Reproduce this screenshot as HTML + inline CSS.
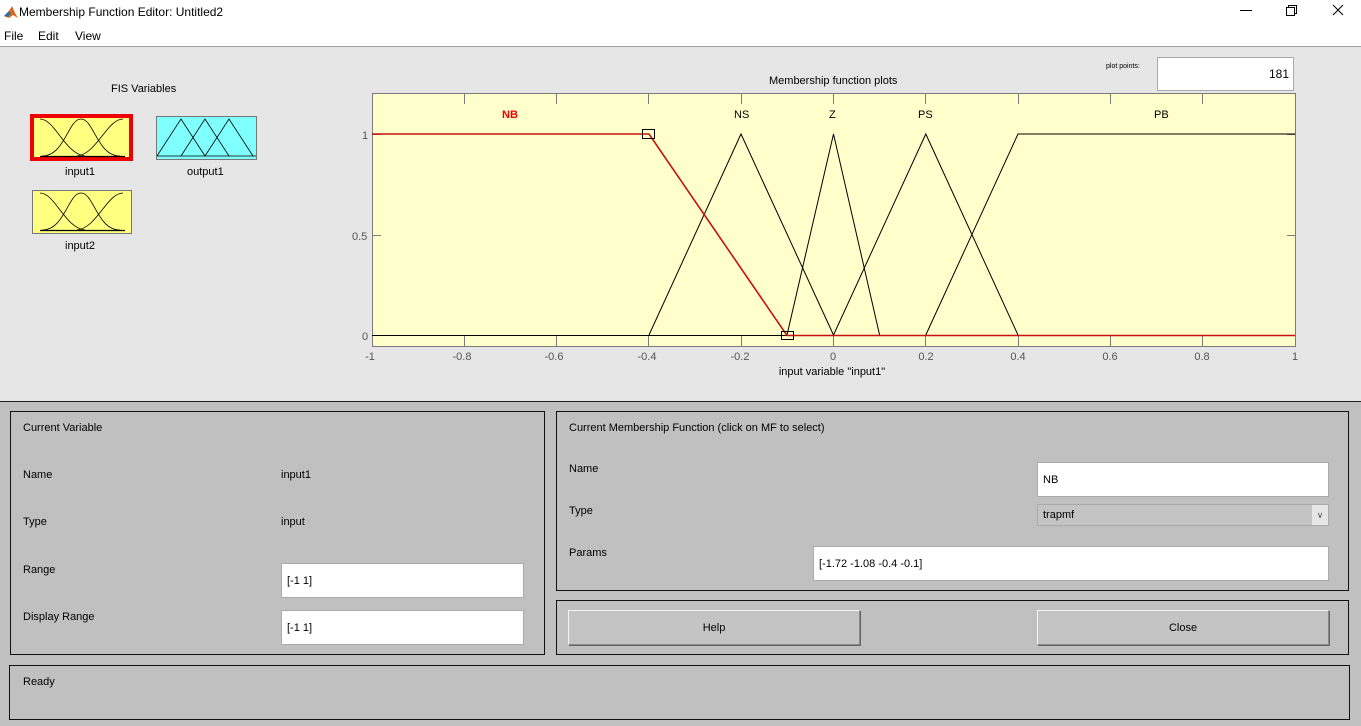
<!DOCTYPE html>
<html><head><meta charset="utf-8"><style>
*{margin:0;padding:0;box-sizing:border-box}
body{width:1361px;height:726px;overflow:hidden;background:#e6e6e6;font-family:"Liberation Sans",Arial,sans-serif;font-size:11px;color:#000;position:relative}
.a{position:absolute}
.title{left:0;top:0;width:1361px;height:25px;background:#fff}
.menu{left:0;top:25px;width:1361px;height:22px;background:#fff;border-bottom:1px solid #a0a0a0}
.bot{left:0;top:401px;width:1361px;height:325px;background:#c0c0c0;border-top:1px solid #222}
.panel{border:1px solid #111}
.inp{background:#fff;border:1px solid #aaa;padding-left:5px;display:flex;align-items:center;font-size:11px}
.btn{background:#c4c4c4;border:1px solid #888;border-top-color:#f4f4f4;border-left-color:#f4f4f4;box-shadow:1px 1px 0 #666;display:flex;align-items:center;justify-content:center}
</style></head><body>
<div class="a title">
 <svg class="a" style="left:3px;top:4px" width="16" height="16" viewBox="0 0 16 16"><path d="M1 12 L6 7 L9 2 L12 9 L15 14 L10 11 L6 14Z" fill="#d9661a"/><path d="M1 12 L6 7 L8 10 L4 13Z" fill="#2a6fa8"/></svg>
 <span class="a" style="left:19px;top:5px;font-size:12px">Membership Function Editor: Untitled2</span>
 <svg class="a" style="left:1230px;top:0" width="131" height="25"><line x1="10" y1="10.5" x2="22" y2="10.5" stroke="#000"/><rect x="56.5" y="7.5" width="8" height="8" fill="none" stroke="#000"/><path d="M58.5 7.5V5.5H66.5V13.5H64.5" fill="none" stroke="#000"/><path d="M103 5L113 15M113 5L103 15" stroke="#000"/></svg>
</div>
<div class="a menu"><span class="a" style="left:4px;top:4px;font-size:12px">File</span><span class="a" style="left:38px;top:4px;font-size:12px">Edit</span><span class="a" style="left:75px;top:4px;font-size:12px">View</span></div>

<span class="a" style="left:111px;top:83px">FIS Variables</span>
<svg class="a" style="left:30px;top:114px" width="230" height="125">
 <rect x="2" y="2" width="99" height="43" fill="#ffff80" stroke="#e00" stroke-width="4"/>
 <g fill="none" stroke="#000" stroke-width=".8">
  <path d="M10 5 C25 5 35 40 55 42"/>
  <path d="M12 42 C35 42 38 5 51 5 C64 5 67 42 90 42"/>
  <path d="M47 42 C67 40 77 5 93 5"/>
  <path d="M10 42.5H95" stroke-width="1.2"/>
 </g>
 <rect x="126.5" y="2.5" width="100" height="43" fill="#80ffff" stroke="#777"/>
 <path d="M127 42 L151 5 L175 42 M151 42 L175 5 L199 42 M175 42 L199 5 L223 42 M127 42H226" fill="none" stroke="#000" stroke-width=".8"/>
 <rect x="2.5" y="76.5" width="99" height="43" fill="#ffff80" stroke="#777"/>
 <g fill="none" stroke="#000" stroke-width=".8" transform="translate(0,74)">
  <path d="M10 5 C25 5 35 40 55 42"/>
  <path d="M12 42 C35 42 38 5 51 5 C64 5 67 42 90 42"/>
  <path d="M47 42 C67 40 77 5 93 5"/>
  <path d="M10 42.5H95" stroke-width="1.2"/>
 </g>
</svg>
<span class="a" style="left:65px;top:166px">input1</span>
<span class="a" style="left:187px;top:166px">output1</span>
<span class="a" style="left:65px;top:240px">input2</span>

<span class="a" style="left:769px;top:75px">Membership function plots</span>
<span class="a" style="left:1106px;top:63px;font-size:7px">plot points:</span>
<div class="a inp" style="left:1157px;top:57px;width:137px;height:34px;justify-content:flex-end;padding-right:4px;font-size:12px">181</div>

<svg class="a" style="left:0;top:0" width="1361" height="400">
 <rect x="372.5" y="93.5" width="923" height="253" fill="#ffffcc" stroke="#7a7a7a"/>
 <g stroke="#7a7a7a">
  <path d="M464.5 94v10M556.5 94v10M648.5 94v10M741.5 94v10M833.5 94v10M925.5 94v10M1018.5 94v10M1110.5 94v10M1202.5 94v10"/>
  <path d="M464.5 346v-10M556.5 346v-10M648.5 346v-10M741.5 346v-10M833.5 346v-10M925.5 346v-10M1018.5 346v-10M1110.5 346v-10M1202.5 346v-10"/>
  <path d="M373 134.5h8M373 235.5h8M373 335.5h8M1295 134.5h-8M1295 235.5h-8M1295 335.5h-8"/>
 </g>
 <g fill="none" stroke="#000" stroke-width="1">
  <path d="M372 335.5H1295"/>
  <path d="M649 335L741 134L833.5 335"/>
  <path d="M787 335L833.5 134L879.6 335"/>
  <path d="M833.5 335L925.8 134L1018 335"/>
  <path d="M925.8 335L1018 134H1295"/>
 </g>
 <path d="M372 134H649L787 335.5H1295" fill="none" stroke="#c81010" stroke-width="1.6"/>
 <rect x="642.5" y="129.5" width="12" height="9" fill="none" stroke="#000"/>
 <rect x="781.5" y="331.5" width="12" height="8" fill="none" stroke="#000"/>
 <g font-family="Liberation Sans, Arial, sans-serif" font-size="11" fill="#555">
  <text x="502" y="118" fill="#e00" font-weight="bold">NB</text>
  <g fill="#000"><text x="734" y="118">NS</text><text x="829" y="118">Z</text><text x="918" y="118">PS</text><text x="1154" y="118">PB</text></g>
  <text x="362" y="139">1</text><text x="352" y="240">0.5</text><text x="362" y="340">0</text>
  <g text-anchor="middle"><text x="370" y="360">-1</text><text x="462" y="360">-0.8</text><text x="554" y="360">-0.6</text><text x="647" y="360">-0.4</text><text x="740" y="360">-0.2</text><text x="833" y="360">0</text><text x="926" y="360">0.2</text><text x="1018" y="360">0.4</text><text x="1110" y="360">0.6</text><text x="1202" y="360">0.8</text><text x="1295" y="360">1</text>
  <text x="832" y="375" fill="#000">input variable "input1"</text></g>
 </g>
</svg>

<div class="a bot"></div>
<div class="a panel" style="left:10px;top:411px;width:535px;height:244px"></div>
<span class="a" style="left:23px;top:422px">Current Variable</span>
<span class="a" style="left:23px;top:469px">Name</span><span class="a" style="left:281px;top:469px">input1</span>
<span class="a" style="left:23px;top:516px">Type</span><span class="a" style="left:281px;top:516px">input</span>
<span class="a" style="left:23px;top:564px">Range</span>
<div class="a inp" style="left:281px;top:563px;width:243px;height:35px">[-1 1]</div>
<span class="a" style="left:23px;top:611px">Display Range</span>
<div class="a inp" style="left:281px;top:610px;width:243px;height:35px">[-1 1]</div>

<div class="a panel" style="left:556px;top:411px;width:793px;height:180px"></div>
<span class="a" style="left:569px;top:422px">Current Membership Function (click on MF to select)</span>
<span class="a" style="left:569px;top:463px">Name</span>
<div class="a inp" style="left:1037px;top:462px;width:292px;height:35px">NB</div>
<span class="a" style="left:569px;top:505px">Type</span>
<div class="a inp" style="left:1037px;top:504px;width:292px;height:22px;background:#c4c4c4">trapmf<span class="a" style="right:0;top:0;width:16px;height:20px;background:#e6e6e6;text-align:center;font-size:9px;line-height:20px;color:#555">&#8744;</span></div>
<span class="a" style="left:569px;top:547px">Params</span>
<div class="a inp" style="left:813px;top:546px;width:516px;height:35px">[-1.72 -1.08 -0.4 -0.1]</div>

<div class="a panel" style="left:556px;top:600px;width:793px;height:55px"></div>
<div class="a btn" style="left:568px;top:610px;width:292px;height:35px">Help</div>
<div class="a btn" style="left:1037px;top:610px;width:292px;height:35px">Close</div>

<div class="a panel" style="left:9px;top:665px;width:1341px;height:55px"></div>
<span class="a" style="left:23px;top:676px">Ready</span>
</body></html>
